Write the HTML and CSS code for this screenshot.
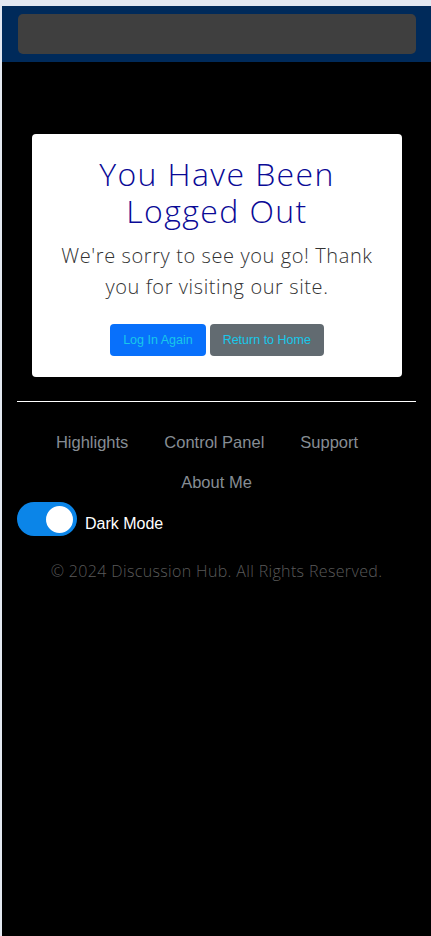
FILE: index.html
```html
<!DOCTYPE html>
<html lang="en">
<head>
<meta charset="utf-8">
<title>Logged Out</title>
<link rel="stylesheet" href="styles.css">
</head>
<body>
<div class="page">
  <header class="topbar">
    <div class="topbar-inner"></div>
  </header>
  <main class="main">
    <section class="card">
      <h1 class="card-title">You Have Been Logged Out</h1>
      <p class="card-text">We're sorry to see you go! Thank you for visiting our site.</p>
      <div class="actions">
        <a class="btn btn-primary" href="#">Log In Again</a>
        <a class="btn btn-secondary" href="#">Return to Home</a>
      </div>
    </section>
  </main>
  <footer class="footer">
    <hr class="divider">
    <ul class="footer-nav">
      <li><a href="#">Highlights</a></li>
      <li><a href="#">Control Panel</a></li>
      <li><a href="#">Support</a></li>
      <li class="last"><a href="#">About Me</a></li>
    </ul>
    <label class="mode">
      <span class="switch"><span class="knob"></span></span>
      <span class="mode-label">Dark Mode</span>
    </label>
    <p class="copyright">© 2024 Discussion Hub. All Rights Reserved.</p>
  </footer>
</div>
</body>
</html>
```
FILE: styles.css
```css
html, body {
  margin: 0;
  padding: 0;
}
body {
  background: #e3e8f1;
  font-family: "Liberation Sans", Arial, sans-serif;
}
.page {
  margin: 6px 0 0 2px;
  background: #000;
  min-height: 930px;
}
.topbar {
  background: #002a5a;
  padding: 8px 15px 8px 16px;
}
.topbar-inner {
  height: 40px;
  background: #3f3f3f;
  border-radius: 5px;
}
.main {
  padding: 72px 29px 0 30px;
}
.card {
  background: #fff;
  border-radius: 4px;
  padding: 21px 20px 21px;
  text-align: center;
}
.card-title {
  margin: 0;
  font-family: "Open Sans", sans-serif;
  font-weight: 300;
  font-size: 32px;
  line-height: 37px;
  color: #0a0a96;
  letter-spacing: 1.4px;
}
.card-text {
  margin: 11px 0 0;
  font-family: "Open Sans", sans-serif;
  font-weight: 300;
  font-size: 20px;
  line-height: 31px;
  color: #333;
  letter-spacing: 0.6px;
}
.actions {
  margin-top: 22px;
  display: flex;
  justify-content: center;
  gap: 4px;
}
.btn {
  display: inline-block;
  font-size: 12.5px;
  line-height: 32px;
  height: 32px;
  padding: 0 13px;
  border-radius: 4px;
  color: #18c8ea;
  text-decoration: none;
}
.btn-primary {
  background: #0870fb;
}
.btn-secondary {
  background: #626b71;
}
.footer {
  padding: 24px 15px 0;
}
.divider {
  margin: 0;
  border: 0;
  border-top: 1px solid #fff;
}
.footer-nav {
  list-style: none;
  margin: 20px 0 0;
  padding: 0 19px 0 0;
  display: flex;
  flex-wrap: wrap;
  justify-content: center;
}
.footer-nav li {
  padding: 0 18px;
}
.footer-nav li.last {
  margin-left: 19px;
}
.footer-nav a {
  display: block;
  line-height: 40px;
  font-size: 16.5px;
  color: #868d94;
  text-decoration: none;
}
.mode {
  display: flex;
  align-items: center;
  gap: 8px;
}
.switch {
  width: 60px;
  height: 34px;
  border-radius: 17px;
  background: #0b85e8;
  display: flex;
  align-items: center;
  justify-content: flex-end;
  padding-right: 4px;
  box-sizing: border-box;
}
.knob {
  width: 27px;
  height: 27px;
  border-radius: 50%;
  background: #fff;
}
.mode-label {
  margin-top: 9px;
  font-size: 16px;
  color: #fff;
}
.copyright {
  margin: 24px 0 0;
  text-align: center;
  font-family: "Open Sans", sans-serif;
  font-weight: 300;
  font-size: 16px;
  color: #5a5a5a;
  letter-spacing: 0.35px;
}
```
